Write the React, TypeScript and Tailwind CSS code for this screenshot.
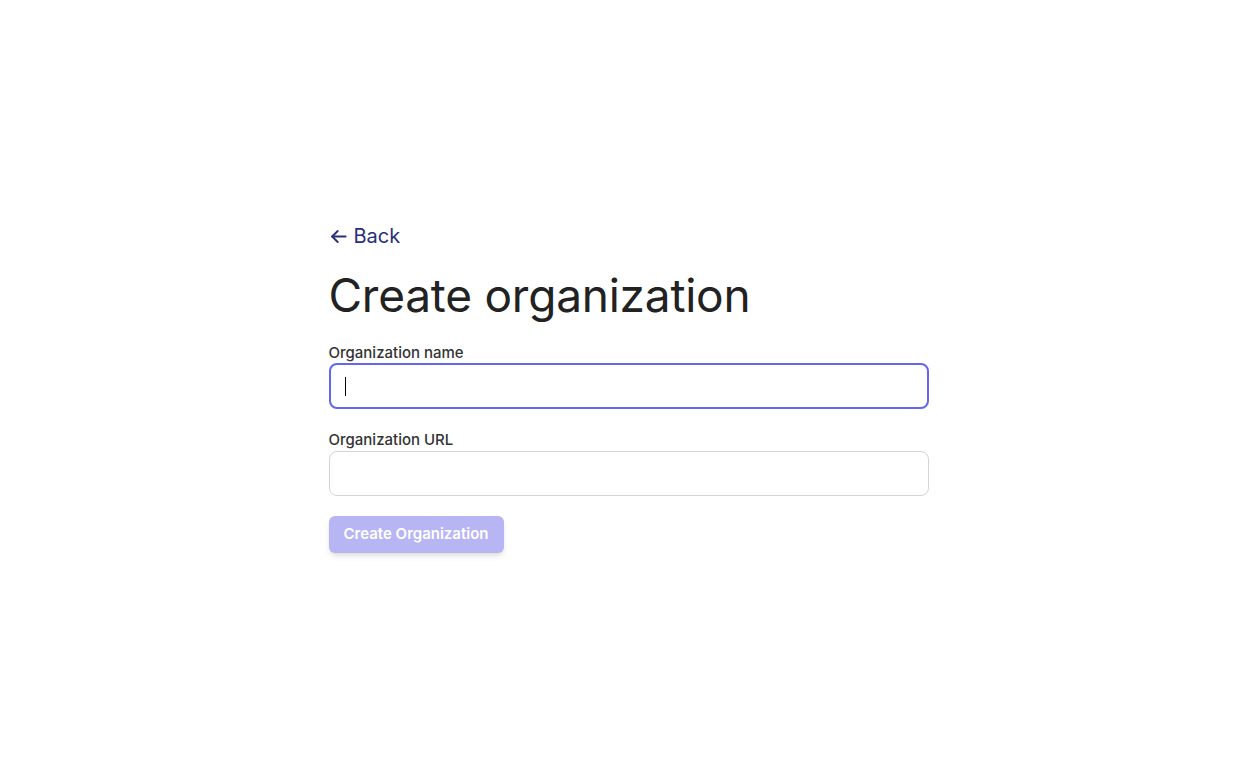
import React from "react";

const App: React.FC = () => {
    return (
        <div className="min-h-screen w-full bg-white flex items-center justify-center font-['Inter',sans-serif]">
            <div className="w-[600px] flex flex-col pt-[3px]">
                <a href="#" className="flex items-center gap-[6px] text-[20px] leading-7 text-[#28307a] w-fit">
                    <svg width="19" height="19" viewBox="0 0 24 24" fill="none" stroke="currentColor" strokeWidth="2.4" strokeLinecap="round" strokeLinejoin="round">
                        <path d="M21 12H4" />
                        <path d="M11 19l-7-7 7-7" />
                    </svg>
                    Back
                </a>
                <h1 className="mt-[17px] text-[46px] leading-[56px] font-normal text-[#222] tracking-[-0.005em]">Create organization</h1>
                <form className="mt-[20px] flex flex-col">
                    <label className="text-[15px] font-medium text-[#333] leading-5">Organization name</label>
                    <div className="relative">
                        <input
                            autoFocus
                            className="w-full h-[46px] rounded-lg border-2 border-[#6366f1] px-[14px] text-base outline-none caret-transparent"
                        />
                        <span className="absolute left-[16px] top-[14px] w-px h-[19px] bg-black" />
                    </div>
                    <label className="mt-[21px] text-[15px] font-medium text-[#333] leading-5">Organization URL</label>
                    <input className="mt-[1px] h-[45px] rounded-lg border border-[#d4d4d4] px-[14px] text-base outline-none" />
                    <button
                        type="button"
                        disabled
                        className="mt-5 w-fit h-[37px] px-[15px] rounded-md bg-[#b8b5f5] text-white text-[15px] font-semibold shadow-md"
                    >
                        Create Organization
                    </button>
                </form>
            </div>
        </div>
    );
};

export default App;
